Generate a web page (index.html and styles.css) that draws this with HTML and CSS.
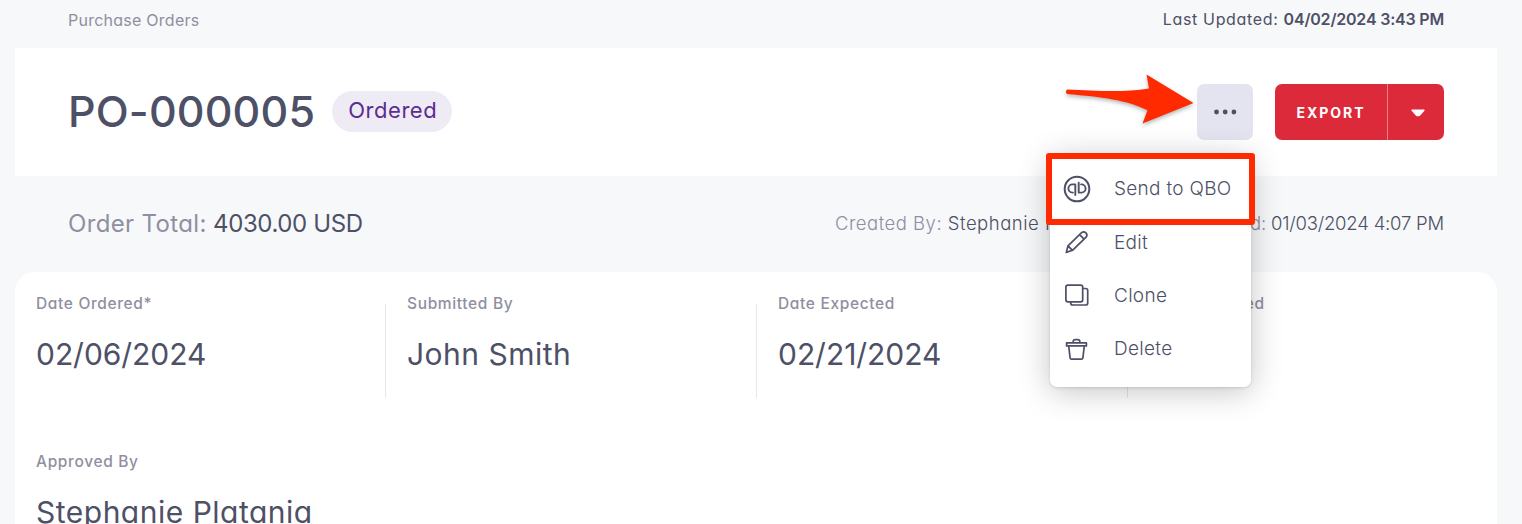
FILE: index.html
```html
<!DOCTYPE html>
<html lang="en">
<head>
  <meta charset="UTF-8">
  <title>PO-000005 - Purchase Orders</title>
  <link rel="stylesheet" href="styles.css">
</head>
<body>

<div class="topbar">
  <a class="breadcrumb">Purchase Orders</a>
  <div class="updated"><span class="updated-label">Last Updated:</span> <b>04/02/2024 3:43 PM</b></div>
</div>

<header class="header">
  <h1>PO-000005</h1>
  <span class="badge">Ordered</span>

  <div class="actions">
    <div class="more">
      <button class="more-btn" aria-label="More actions">
        <svg width="24" height="6" viewBox="0 0 24 6" fill="#4d5066">
          <circle cx="3.500" cy="3" r="2.400"/><circle cx="12.200" cy="3" r="2.400"/><circle cx="20.900" cy="3" r="2.400"/>
        </svg>
      </button>

      <svg class="arrow" width="140" height="60" viewBox="0 0 140 60">
        <path d="M8 19.5Q6 21.500 8 24C43 27 68 30 88.500 40.300L83.500 53.500L134.500 33L87.500 4.500L90 18.500C66 22.500 38 21 8 19.500Z" fill="#ff2a00"/>
      </svg>

      <!-- Actions menu -->
      <ul class="menu">
        <li>
          <svg class="icon" width="28" height="28" viewBox="0 0 28 28">
            <circle cx="14" cy="14" r="12.300" stroke-width="2"/>
            <path d="M12.300 20V9.400H9.500a4.100 4.100 0 0 0 0 8.200h.4M15.700 7.600v10h2.800a4.100 4.100 0 0 0 0-8.200h-.4" stroke-width="1.900"/>
          </svg>
          <span>Send to QBO</span>
        </li>
        <li>
          <svg class="icon" width="28" height="28" viewBox="0 0 28 28">
            <path d="M3.300 24.400L5 17.800L18.600 4.700a3.200 3.200 0 0 1 4.500 4.500L9.500 22.300ZM16.600 6.700l4.500 4.500M5 17.800l4.500 4.500"/>
          </svg>
          <span>Edit</span>
        </li>
        <li>
          <svg class="icon" width="28" height="28" viewBox="0 0 28 28">
            <rect x="2.900" y="4.200" width="16.800" height="16.600" rx="2"/>
            <path d="M19.700 7.500h3a2 2 0 0 1 2 2v12.500a2 2 0 0 1-2 2h-13a2 2 0 0 1-2-2v-1.200"/>
          </svg>
          <span>Clone</span>
        </li>
        <li>
          <svg class="icon" width="28" height="28" viewBox="0 0 28 28">
            <path d="M3.600 7.800h19.800v3.100H3.600ZM10.200 7.800V6.600a2 2 0 0 1 2-2h2.600a2 2 0 0 1 2 2v1.200M5.700 10.900l1.400 11.900a1.500 1.500 0 0 0 1.500 1.400h9.800a1.500 1.500 0 0 0 1.500-1.400l1.400-11.900"/>
          </svg>
          <span>Delete</span>
        </li>
      </ul>
      <div class="highlight"></div>
    </div>

    <div class="export">
      <button class="export-btn">EXPORT</button>
      <button class="export-toggle" aria-label="Export options">
        <svg width="14" height="8" viewBox="0 0 14 8" fill="#fff"><path d="M1 .5h12q1 .5.400 1.300L9 6.700q-2 1.300-4 0L.6 1.800Q0 1 1 .5Z"/></svg>
      </button>
    </div>
  </div>
</header>

<div class="summary">
  <div class="total"><span>Order Total:</span> 4030.00 USD</div>
  <div class="meta">
    <div class="created-by"><span>Created By:</span> Stephanie Platania</div>
    <div class="created"><span>Created:</span> 01/03/2024 4:07 PM</div>
  </div>
</div>

<main class="details">
  <div class="field divided">
    <label>Date Ordered*</label>
    <p class="date">02/06/2024</p>
  </div>
  <div class="field divided">
    <label>Submitted By</label>
    <p>John Smith</p>
  </div>
  <div class="field divided">
    <label>Date Expected</label>
    <p class="date">02/21/2024</p>
  </div>
  <div class="field">
    <label>Date Received</label>
  </div>
  <div class="field">
    <label>Approved By</label>
    <p>Stephanie Platania</p>
  </div>
</main>

</body>
</html>
```
FILE: styles.css
```css
* {
  box-sizing: border-box;
}
body {
  margin: 0;
  height: 524px;
  overflow: hidden;
  background: #f7f8fa;
  color: #4d5066;
  font-family: Inter, "Open Sans", sans-serif;
  font-feature-settings: "cv11";
}
button {
  border: none;
  padding: 0;
  font-family: inherit;
}
.topbar {
  display: flex;
  justify-content: space-between;
  height: 48px;
  padding: 0 78px 0 68px;
  font-size: 16px;
  line-height: 39px;
}
.breadcrumb {
  color: #8f8fa1;
  line-height: 41px;
  letter-spacing: 0.25px;
}
.updated {
  letter-spacing: 0.65px;
}
.updated b {
  font-weight: 600;
  letter-spacing: -0.2px;
}

/* header card */
.header {
  display: flex;
  align-items: center;
  height: 128px;
  margin: 0 25px 0 15px;
  padding: 0 53px;
  background: #fff;
}
h1 {
  margin: -2px 0 0;
  font-size: 43px;
  font-weight: 500;
  line-height: 60px;
  letter-spacing: 0.15px;
}
.badge {
  height: 41px;
  margin: -1px 0 0 17px;
  padding: 0 15px 0 16px;
  border-radius: 21px;
  background: #eeebf5;
  color: #5c2d91;
  font-size: 22px;
  line-height: 39px;
  letter-spacing: 0.55px;
}
.actions {
  display: flex;
  gap: 22px;
  margin-left: auto;
}
.more {
  position: relative;
}
.more-btn {
  display: flex;
  align-items: center;
  justify-content: center;
  width: 56px;
  height: 56px;
  border-radius: 7px;
  background: #e4e4f0;
}
.arrow {
  position: absolute;
  top: -14px;
  left: -138px;
  z-index: 3;
  filter: drop-shadow(0 2px 2px rgba(0,0,0,0.3));
}
.menu {
  position: absolute;
  top: 71px;
  right: 2px;
  z-index: 2;
  width: 201px;
  height: 232px;
  margin: 0;
  padding: 7px 0 0 13px;
  list-style: none;
  border-radius: 7px;
  background: #fff;
  box-shadow: 0 4px 32px rgba(0,0,0,0.24), 0 1px 3px rgba(0,0,0,0.12);
}
.menu li {
  display: flex;
  align-items: center;
  gap: 23px;
  height: 53.4px;
  font-size: 19px;
  font-weight: 300;
  letter-spacing: 0.3px;
}
.icon {
  fill: none;
  stroke: #4d5066;
  stroke-width: 1.7;
  stroke-linejoin: round;
  stroke-linecap: round;
}
.highlight {
  position: absolute;
  top: 69px;
  right: -2px;
  z-index: 3;
  width: 209px;
  height: 72px;
  border: 6px solid #ff2a00;
  border-radius: 3px;
}
.export {
  display: flex;
  width: 169px;
  height: 56px;
  border-radius: 7px;
  overflow: hidden;
}
.export-btn {
  width: 113px;
  border-right: 1px solid #ea8088;
  background: #dc2a3a;
  color: #fff;
  font-size: 14px;
  font-weight: 700;
  letter-spacing: 2px;
}
.export-toggle {
  flex: 1;
  padding-left: 3px;
  background: #dc2a3a;
}

/* order summary */
.summary {
  display: flex;
  align-items: center;
  justify-content: space-between;
  height: 96px;
  padding: 0 78px 2px 68px;
}
.summary span {
  color: #8f8fa1;
}
.total {
  font-size: 24px;
  letter-spacing: -0.4px;
}
.total span {
  letter-spacing: 0.35px;
}
.meta {
  display: flex;
  width: 609px;
  justify-content: space-between;
  font-size: 18.5px;
  font-weight: 300;
}
.created-by {
  letter-spacing: 0.5px;
}
.created {
  letter-spacing: -0.2px;
}

/* details card */
.details {
  display: grid;
  grid-template-columns: repeat(4, 371px);
  grid-auto-rows: 158px;
  height: 252px;
  margin: 0 25px 0 15px;
  border-radius: 20px 20px 0 0;
  background: #fff;
}
.field {
  padding: 22px 0 0 21px;
}
.divided {
  background: linear-gradient(#e6e6ec, #e6e6ec) right 32px / 1px 94px no-repeat;
}
.field label {
  display: block;
  color: #8f8fa1;
  font-size: 15.5px;
  font-weight: 500;
  line-height: 20px;
  letter-spacing: 0.65px;
}
.field p {
  margin: 18px 0 0;
  font-size: 30px;
  line-height: 44px;
  letter-spacing: 0.5px;
}
.field p.date {
  letter-spacing: -0.05px;
}
```
